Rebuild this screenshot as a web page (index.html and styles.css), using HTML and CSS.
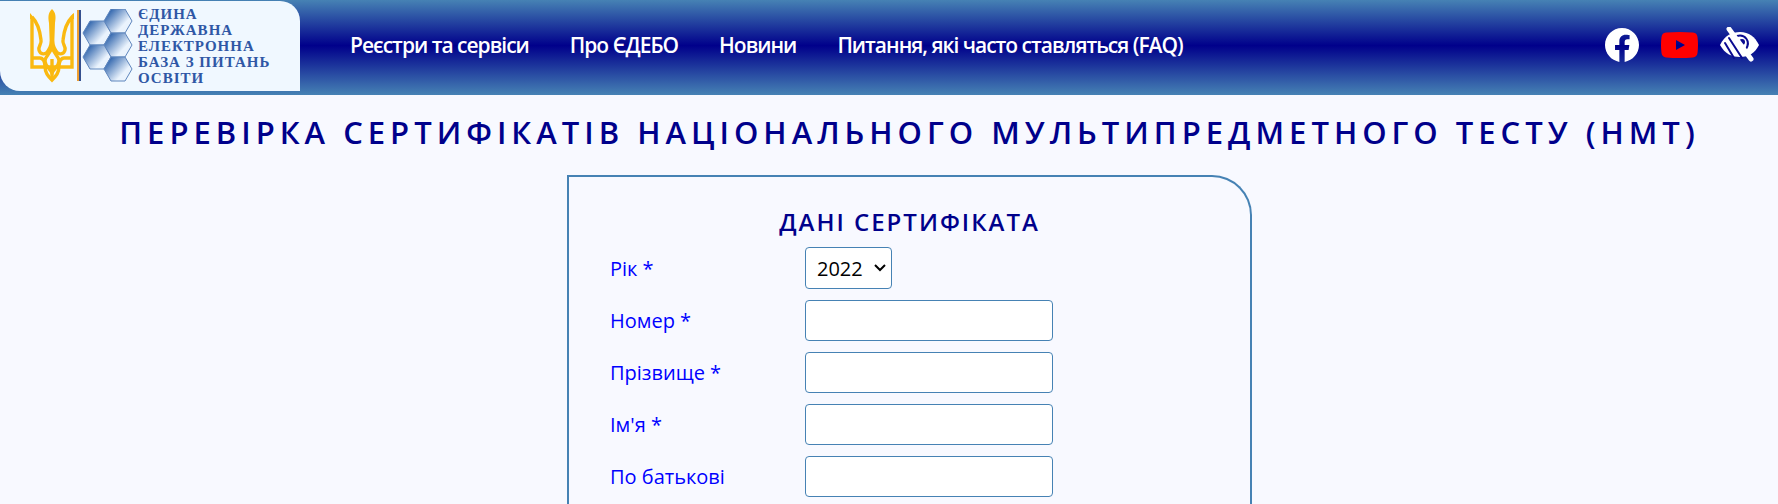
FILE: index.html
```html
<!DOCTYPE html>
<html lang="uk">
<head>
    <meta charset="UTF-8">
    <meta name="viewport" content="width=device-width, initial-scale=1.0">
    <title>Перевірка сертифікатів НМТ</title>
    <link rel="stylesheet" href="styles.css">
</head>
<body>
    <header class="header">
        <a href="#" class="logo">
            <svg class="logo-picture" width="104" height="74" viewBox="0 0 104 74" aria-hidden="true">
                <defs>
                    <linearGradient id="cell" x1="0" y1="0.1" x2="1" y2="0.9">
                        <stop offset="0.1" stop-color="#2f64ac"/>
                        <stop offset="0.7" stop-color="#eaf3fd"/>
                    </linearGradient>
                </defs>
                <!-- Trident -->
                <g fill="none" stroke="#fab910" stroke-width="3.400" stroke-linejoin="miter">
                    <path d="M2 8 V58 H42 V8 C36 14 34 22 33 31 C32 35 36 37 35 41 C34 46 28 46 26 42 C23 38 22 32 22 26"/>
                    <path d="M2 8 C8 14 10 22 11 31 C12 35 8 37 9 41 C10 46 16 46 18 42 C21 38 22 32 22 26"/>
                    <path d="M2 49 H10 C13 49 15 53 15 57 C15 64 18 67 22 71 C26 67 29 64 29 57 C29 53 31 49 34 49 H42"/>
                    <path d="M22 37 C21 45 15 47 15 52 C15 57 20 59 22 64 C24 59 29 57 29 52 C29 47 23 45 22 37"/>
                    <path d="M22 50 V70"/>
                </g>
                <path fill="#fab910" d="M0 4l5 6H0zM44 4l-5 6h5z"/>
                <path fill="#fab910" d="M22 0 C26 4 26 8 25 14 L24 42 H20 L19 14 C18 8 18 4 22 0z"/>
                <!-- Divider -->
                <path fill="#ef9f31" d="M47 1h2v71h-2z"/>
                <path fill="#35508f" d="M49 1h2v71h-2z"/>
                <!-- Cells -->
                <g fill="url(#cell)" stroke="#5f86bd" stroke-width="1">
                    <path d="M81 0h14l7 12-7 12H81l-7-12z"/>
                    <path d="M60 12h14l7 12-7 12H60l-7-12z"/>
                    <path d="M81 24h14l7 12-7 12H81l-7-12z"/>
                    <path d="M60 36h14l7 12-7 12H60l-7-12z"/>
                    <path d="M81 48h14l7 12-7 12H81l-7-12z"/>
                </g>
            </svg>
            <span class="logo-text">Єдина<br>державна<br>електронна<br>база з питань<br>освіти</span>
        </a>
        <nav class="menu">
            <a href="#">Реєстри та сервіси</a>
            <a href="#">Про ЄДЕБО</a>
            <a href="#">Новини</a>
            <a href="#">Питання, які часто ставляться (FAQ)</a>
        </nav>
        <div class="social">
            <a href="#" aria-label="Facebook">
                <svg width="34" height="34" viewBox="0 0 24 24">
                    <path fill="#fff" d="M24 12.07C24 5.44 18.63.07 12 .07S0 5.44 0 12.07c0 5.99 4.39 10.95 10.13 11.85v-8.38H7.08v-3.47h3.05V9.43c0-3.01 1.79-4.67 4.53-4.67 1.31 0 2.68.24 2.68.24v2.95h-1.51c-1.49 0-1.96.93-1.96 1.87v2.25h3.33l-.53 3.47h-2.8v8.38C19.61 23.02 24 18.06 24 12.07z"/>
                </svg>
            </a>
            <a href="#" aria-label="YouTube">
                <svg width="37" height="26" viewBox="0 0 37 26">
                    <path fill="#f00" fill-rule="evenodd" d="M5 .6Q18.500-.6 32 .6Q36 1 36.500 5Q37.500 13 36.500 21Q36 25 32 25.400Q18.500 26.600 5 25.400Q1 25 .5 21Q-.5 13 .5 5Q1 1 5 .6zM15 8v10l9-5z"/>
                </svg>
            </a>
            <button type="button" class="vision" aria-label="Версія для людей з порушенням зору">
                <svg width="40" height="36" viewBox="0 0 40 36">
                    <path fill="#fff" d="M0 18C5 8 12 5 20 5C29 5 35 10 39 18C35 26 29 30 20 30C12 30 5 27 0 18z"/>
                    <g fill="none" stroke="#0a0a90" stroke-width="2" stroke-linecap="round">
                        <path d="M17 9C25 7 31 14 26 22"/>
                        <path d="M5 16L14 31M9 11L22 31"/>
                    </g>
                    <circle cx="22" cy="15" r="3" fill="#0a0a90"/>
                    <path d="M9 2L31 32" stroke="#fff" stroke-width="5" stroke-linecap="round"/>
                </svg>
            </button>
        </div>
    </header>

    <main class="content">
        <h1>Перевірка сертифікатів національного мультипредметного тесту (НМТ)</h1>
        <form class="certificate">
            <h2>Дані сертифіката</h2>
            <div class="row">
                <label for="year">Рік *</label>
                <select id="year">
                    <option>2022</option>
                </select>
            </div>
            <div class="row">
                <label for="number">Номер *</label>
                <input type="text" id="number" required>
            </div>
            <div class="row">
                <label for="surname">Прізвище *</label>
                <input type="text" id="surname" required>
            </div>
            <div class="row">
                <label for="name">Ім'я *</label>
                <input type="text" id="name" required>
            </div>
            <div class="row">
                <label for="patronymic">По батькові</label>
                <input type="text" id="patronymic">
            </div>
        </form>
    </main>
</body>
</html>
```
FILE: styles.css
```css
:root {
    --page-color: #f8f9ff;
    --logo-color: #f0f8ff;
    --border-color: steelblue;
    --title-color: darkblue;
}

* {
    box-sizing: border-box;
}
body {
    display: flex;
    flex-direction: column;
    min-height: 100vh;
    margin: 0;
    background: var(--page-color);
    font-family: "Open Sans", sans-serif;
    font-size: 20px;
}

/* Header */
.header {
    display: flex;
    align-items: center;
    height: 95px;
    padding: 0 18px 5px 0;
    background: linear-gradient(steelblue, darkblue 48%, steelblue);
}
.logo {
    display: flex;
    align-items: center;
    align-self: flex-start;
    gap: 4px;
    width: 300px;
    height: 90px;
    margin-top: 1px;
    padding-left: 30px;
    background: var(--logo-color);
    border-radius: 0 20px;
    text-decoration: none;
}
.logo-text {
    color: #2f57a5;
    font-family: "Liberation Serif", serif;
    font-size: 15px;
    font-weight: bold;
    line-height: 16px;
    letter-spacing: 1px;
    text-transform: uppercase;
    white-space: nowrap;
}
.menu {
    display: flex;
    gap: 41px;
    margin-left: 50px;
}
.menu a {
    color: #fff;
    font-size: 21px;
    font-weight: 600;
    letter-spacing: -1px;
    text-decoration: none;
    white-space: nowrap;
}
.social {
    display: flex;
    align-items: center;
    gap: 22px;
    margin-left: auto;
}
.social a, .vision {
    display: flex;
}
.vision {
    padding: 0;
    background: none;
    border: none;
    cursor: pointer;
}

/* Content */
.content {
    display: flex;
    flex: 1;
    flex-direction: column;
    padding-left: 41px;
}
h1, h2 {
    margin: 0;
    color: var(--title-color);
    font-weight: 600;
    text-align: center;
    text-transform: uppercase;
}
h1 {
    padding: 15px 0 21px;
    font-size: 31px;
    line-height: 44px;
    letter-spacing: 5px;
}
h2 {
    margin-bottom: -6px;
    font-size: 24px;
    line-height: 40px;
    letter-spacing: 2px;
}

/* Certificate form */
.certificate {
    display: flex;
    flex: 1;
    flex-direction: column;
    gap: 11px;
    width: 100%;
    max-width: 685px;
    margin: 0 auto;
    padding: 25px 41px 5px;
    border: 2px solid var(--border-color);
    border-bottom: none;
    border-radius: 0 40px 0 0;
}
.row {
    display: flex;
    align-items: center;
}
.row label {
    width: 195px;
    color: blue;
}
.row input, .row select {
    height: 41px;
    border: 1px solid var(--border-color);
    border-radius: 4px;
    background: #fff;
    color: #000;
    font: inherit;
}
.row input {
    width: 248px;
    padding: 0 10px;
}
.row select {
    width: 87px;
    height: 42px;
    padding-left: 11px;
    appearance: none;
    background: #fff url("data:image/svg+xml,%3Csvg xmlns='http://www.w3.org/2000/svg' width='12' height='8'%3E%3Cpath d='M1 1l5 5 5-5' fill='none' stroke='black' stroke-width='2'/%3E%3C/svg%3E") no-repeat right 5px center;
}
```
